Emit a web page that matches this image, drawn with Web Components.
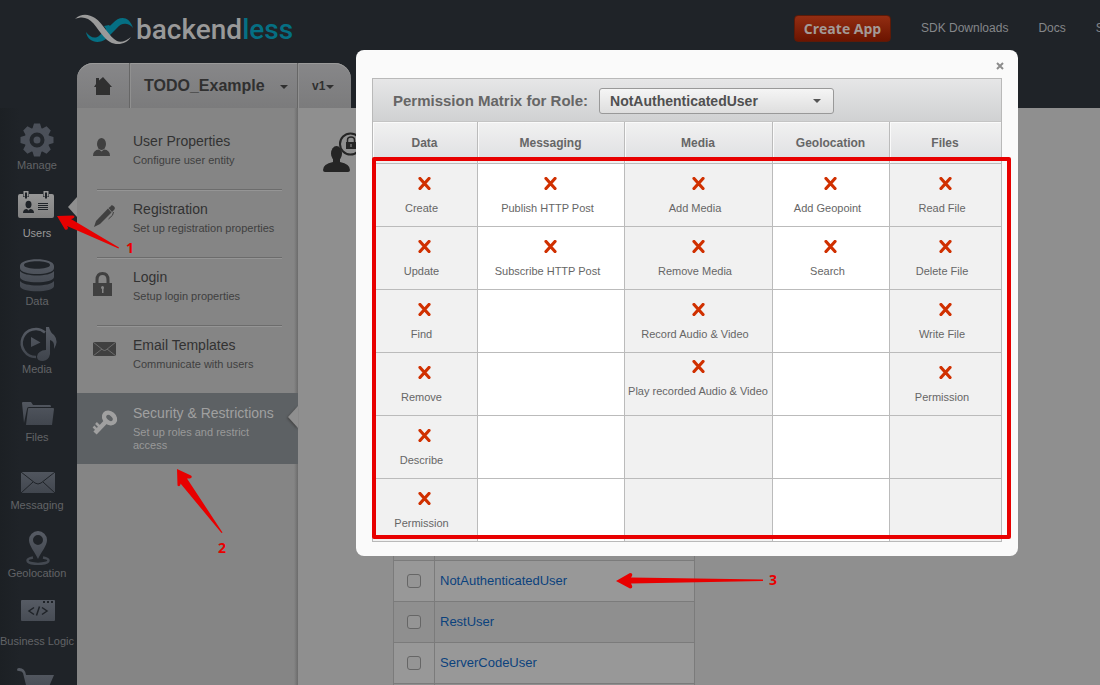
<!DOCTYPE html>
<html lang="en">
<head>
<meta charset="utf-8">
<title>Backendless Console</title>
<style>
  body { margin: 0; background: #1f2328; font-family: "Liberation Sans", Arial, sans-serif; }
</style>
</head>
<body>
<console-shell>
  <console-header slot="header"></console-header>
  <main-nav slot="nav">
    <nav-item icon="manage">Manage</nav-item>
    <nav-item icon="users" active>Users</nav-item>
    <nav-item icon="data">Data</nav-item>
    <nav-item icon="media">Media</nav-item>
    <nav-item icon="files">Files</nav-item>
    <nav-item icon="messaging">Messaging</nav-item>
    <nav-item icon="geolocation">Geolocation</nav-item>
    <nav-item icon="logic">Business Logic</nav-item>
    <nav-item icon="cart"></nav-item>
  </main-nav>
  <sub-menu slot="menu">
    <menu-item icon="person" heading="User Properties">Configure user entity</menu-item>
    <menu-item icon="pen" heading="Registration">Set up registration properties</menu-item>
    <menu-item icon="lock" heading="Login">Setup login properties</menu-item>
    <menu-item icon="mail" heading="Email Templates" last>Communicate with users</menu-item>
    <menu-item icon="key" heading="Security &amp; Restrictions" last active>Set up roles and restrict access</menu-item>
  </sub-menu>
  <role-list></role-list>
  <permission-dialog slot="overlay"><permission-matrix></permission-matrix></permission-dialog>
  <step-arrows slot="overlay"></step-arrows>
</console-shell>

<script>
const GEAR_TEETH = [0, 45, 90, 135].map(a => `<path d="M-3-16.500h6l2 6.500h-10zM-3 16.500h6l2-6.500h-10z" transform="rotate(${a})"/>`).join('');
const NAV_ICONS = {
  manage: `<g transform="translate(37 21)" fill="#4b5059">${GEAR_TEETH}<circle r="12.500"/><circle r="5.500" stroke="#22262b" stroke-width="4"/></g>`,
  users: `<path d="M20 7h3v3h6V7h14v3h6V7h3q2 0 2 2v20q0 2-2 2H20q-2 0-2-2V9q0-2 2-2z"/><path d="M23.500 4h5v5.500h-5zM43.500 4h5v5.500h-5z"/><g fill="#1f2328"><path d="M25 5.500h2v6h-2zM45 5.500h2v6h-2z"/><ellipse cx="28.500" cy="17.500" rx="3" ry="3.700"/><path d="M23 26q0-4 4-4l1.500 1.500L30 22q4 0 4 4z"/><path d="M38 16h10v1H38zM38 18h10v1H38zM38 20h10v1H38zM38 22h10v1H38z"/></g>`,
  data: `<path fill-rule="evenodd" d="M20 11c0-9 34-9 34 0v2c0 8-34 8-34 0zm4-1c0 5 26 5 26 0s-26-5-26 0z"/><path d="M20 16c4 6 30 6 34 0v6c0 7-34 7-34 0zM20 26c4 6 30 6 34 0v5c0 7-34 7-34 0z"/>`,
  media: `<path d="M45 9.500A14 14 0 1 0 36 34" fill="none" stroke="url(#g)" stroke-width="2.500"/><path d="M31 14l9.500 5.500L31 24z"/><path d="M46 4h3q1 5 5 8 5 6 0 14 1-8-4-9v14q-1 6-7 7-6 0-6-4.500 1-6 9-6.500z"/>`,
  files: `<path d="M22 12q0-1 1-1h8l2 3h17q1 0 1 2H29q-2 0-2 2l-3 14z"/><path d="M29 17h24q1 0 1 1l-2 16H26l2-16q0-1 1-1z"/>`,
  messaging: `<path d="M21 13h34v21H21z"/><path d="M21 13l14 11q3 2 6 0l14-11M21 34l12-11M55 34L43 23" fill="none" stroke="#1f2328"/>`,
  geolocation: `<path fill-rule="evenodd" d="M38 4a9 9 0 0 0-9 9c0 6 6 12 9 19 3-7 9-13 9-19a9 9 0 0 0-9-9zm0 4a5 5 0 1 1 0 10 5 5 0 0 1 0-10z"/><path d="M33 30.500q-5.500 1-5.500 3c0 4.500 21 4.500 21 0q0-2-5.500-3" fill="none" stroke="#444951" stroke-width="2.500"/>`,
  logic: `<rect x="21" y="5" width="34" height="21" rx="1"/><path d="M43 6h2v2h-2zM47 6h2v2h-2zM51 6h2v2h-2z" fill="#1f2328"/><path d="M34 12.500L29 16l5 3.500M42 12.500l5 3.500-5 3.500M39.500 11.500l-3 9" fill="none" stroke="#1f2328" stroke-width="1.500"/>`,
  cart: `<path d="M17 7q0-2 2-2 6 0 7 7h28l-6 14H27L23 10q-1-2-4-2-2 0-2-1z"/>`
};
const MENU_ICONS = {
  person: `<ellipse cx="24.500" cy="23" rx="4.500" ry="6"/><path d="M16 35q0-6 6-6.500l2.500 2 2.500-2q6 .5 6 6.500z"/>`,
  pen: `<path d="M17 38l2-6L31 19.500l3.500 4L23 35z"/><path d="M31.500 19l2-1.500q1-2 3-.5 2.500 2 .5 4l-2 2z"/><path d="M36.500 23q.5 3-5 7" stroke="#404040" fill="none"/>`,
  lock: `<path d="M20 27v-4q0-6.500 5.500-6.500T31 23v4" fill="none" stroke="#404040" stroke-width="3"/><path d="M16 26h19v13H16z"/><circle cx="25.500" cy="30.500" r="1.500" fill="#858585"/><path d="M25 31h1.500v5H25z" fill="#858585"/>`,
  mail: `<path d="M16 17h23v14H16z"/><path d="M16 17l10 8q1.500 1 3 0l10-8M16 31l9-7M39 31l-9-7" fill="none" stroke="#808080" stroke-width=".7"/>`,
  key: `<g fill="none" stroke="#a0a0a0"><ellipse cx="32.500" cy="25" rx="6" ry="4.500" stroke-width="4.500" transform="rotate(40 32.500 25)"/><path d="M29 28.500L18 40" stroke-width="4.500"/><path d="M23 34l-4-4M20 37l-3.500-3.500" stroke-width="2.500"/></g>`
};

const define = (name, html, init) => {
  const template = document.createElement('template');
  template.innerHTML = html;
  customElements.define(name, class extends HTMLElement {
    constructor() {
      super();
      this.attachShadow({ mode: 'open' }).append(template.content.cloneNode(true));
    }
    connectedCallback() { if (init) init(this, this.shadowRoot); }
  });
};

define('console-shell', `
<style>
  :host { display: grid; grid-template: 108px minmax(0, 1fr) / 77px 221px minmax(0, 1fr); height: 100vh; overflow: hidden; position: relative; }
  slot[name=header]::slotted(*) { grid-column: 1 / -1; }
  main { display: block; background: #8f8f8f; overflow: hidden; }
</style>
<slot name="header"></slot><slot name="nav"></slot><slot name="menu"></slot>
<main><slot></slot></main><slot name="overlay"></slot>`);

define('console-header', `
<style>
  :host { display: flex; justify-content: space-between; align-items: flex-start; overflow: hidden; background: #1f2328; }
  .left { margin-left: 75px; }
  .brand { display: flex; align-items: center; height: 35px; margin-top: 12px; gap: 3px; text-decoration: none; color: #999; font: 500 28px/35px Roboto, sans-serif; }
  .brand b { font-weight: 500; color: #056f83; }
  .brand svg { display: block; width: 58px; height: 35px; }
  .tabs { display: flex; height: 45px; margin: 16px 0 0 2px; border-radius: 16px 16px 0 0; overflow: hidden; background: linear-gradient(#878789, #7b7b7c); box-shadow: inset 0 1px #9a9a9a; }
  .tabs button { display: flex; align-items: center; border: 0; background: none; padding: 0; color: #303030; font: bold 16px/20px "Liberation Sans", Arial, sans-serif; }
  .tabs button + button { border-left: 1px solid #666; box-shadow: inset 1px 0 #909090; }
  .caret { margin-top: 3px; }
  .home { width: 52px; justify-content: center; }
  .app { width: 168px; padding: 0 9px 0 14px !important; justify-content: space-between; }
  .version { width: 54px; padding-left: 14px !important; font-size: 12px !important; gap: 1px; }
  nav { display: flex; width: 306px; overflow: hidden; padding-top: 15px; align-items: flex-start; white-space: nowrap; }
  nav a { color: #85878a; text-decoration: none; font-size: 12px; line-height: 26px; margin-right: 30px; }
  .create { width: 97px; height: 27px; margin-right: 30px; padding: 0; flex: none; border: 1px solid #5c1a08; border-radius: 4px; background: linear-gradient(#922d12, #6c1400); color: #a39a97; font: bold 14px/24px "Open Sans", sans-serif; }
</style>
<div class="left">
  <a class="brand" href="#" aria-label="backendless">
    <svg viewBox="0 0 58 35"><path fill="#056f83" d="M11 20c4 5 9 8 14 3L38 11c6-7 16-8 20 5-5-6-12-5-16 0L31 27c-7 5-18 4-20-7z"/><path fill="#056f83" d="M29 14l5-1 3 3-4 4z"/><path fill="#9a9a9a" d="M0 7C6 1 14 2 20 6c8 5 14 19 22 23 4 2 9 0 14-4-4 7-14 9-21 5C26 25 21 11 13 7 9 5 5 5 0 7z"/></svg>
    <span>backend<b>less</b></span>
  </a>
  <div class="tabs">
    <button class="home" aria-label="Home"><svg width="20" height="20" viewBox="0 0 20 20" fill="#303030"><path d="M1 11l2-3V2h3v2.500L10 1l9 10h-2v8H3v-8z"/></svg></button>
    <button class="app">TODO_Example<svg class="caret" width="8" height="4"><path d="M0 0h8L4 4z" fill="#303030"/></svg></button>
    <button class="version">v1<svg class="caret" width="8" height="4"><path d="M0 0h8L4 4z" fill="#303030"/></svg></button>
  </div>
</div>
<nav><button class="create">Create App</button><a href="#">SDK Downloads</a><a href="#">Docs</a><a href="#">Support</a></nav>`);

define('main-nav', `
<style>:host { display: flex; flex-direction: column; gap: 14px; padding-top: 11px; background: linear-gradient(90deg, #1c2024, #1f2328 20px); }</style>
<slot></slot>`);

define('nav-item', `
<style>
  :host { display: block; position: relative; flex: none; }
  a { display: block; width: 74px; text-align: center; white-space: nowrap; font-size: 11px; line-height: 16px; color: #626467; text-decoration: none; }
  svg { display: block; width: 77px; height: 38px; --a: #575c65; --b: #40454d; }
  :host([active]) a { color: #999; }
  :host([active]) svg { --a: #999; --b: #7d7d7d; }
  :host([active])::after { content: ""; position: absolute; right: 0; top: 10px; border: 10px solid transparent; border-left: 0; border-right: 9px solid #8f8f8f; }
</style>
<a href="#"><svg viewBox="0 0 77 38" fill="url(#g)"></svg><slot></slot></a>`, (el, root) => {
  root.querySelector('svg').innerHTML =
    `<defs><linearGradient id="g" gradientUnits="userSpaceOnUse" x1="0" y1="4" x2="0" y2="36"><stop stop-color="var(--a)"/><stop offset="1" stop-color="var(--b)"/></linearGradient></defs>` + NAV_ICONS[el.getAttribute('icon')];
});

define('sub-menu', `
<style>:host { display: block; padding-top: 13px; background: linear-gradient(90deg, transparent 217px, #6b6b6b 221px), #858585; }</style>
<slot></slot>`);

define('menu-item', `
<style>
  :host { display: block; position: relative; }
  a { display: flex; min-height: 68px; color: #404040; text-decoration: none; }
  svg { display: block; flex: none; width: 56px; height: 48px; }
  .text { padding: 12px 20px 12px 0; font-size: 11px; line-height: 13px; }
  b { display: block; font-weight: 400; font-size: 14px; line-height: 16px; margin-bottom: 5px; color: #323232; white-space: nowrap; }
  :host(:not([last]))::after { content: ""; position: absolute; left: 20px; right: 16px; bottom: -2px; height: 1px; background: #6c6c6c; border-bottom: 1px solid #959595; }
  :host([active]) { background: #5d6164; }
  :host([active]) a { color: #999; }
  :host([active]) b { color: #a0a0a0; }
  .notch { display: none; position: absolute; right: 0; top: 13px; border: 11px solid transparent; border-left: 0; border-right: 10px solid #8f8f8f; filter: drop-shadow(-1px 1px 1px #444); }
  :host([active]) .notch { display: block; }
</style>
<a href="#"><svg viewBox="0 0 56 48" fill="#404040"></svg><span class="text"><b></b><slot></slot></span></a><i class="notch"></i>`, (el, root) => {
  root.querySelector('svg').innerHTML = MENU_ICONS[el.getAttribute('icon')];
  root.querySelector('b').textContent = el.getAttribute('heading');
});

define('role-list', `
<style>
  :host { display: block; padding: 24px 25px; }
  .head { min-height: 387px; }
  .head svg { display: block; }
  table { width: 302px; margin-left: 70px; border-collapse: collapse; }
  td { height: 40px; padding: 0 5px; border: 1px solid #7b7b7b; background: #989898; font-size: 13px; line-height: 16px; }
  tr:nth-child(odd) td { background: #8f8f8f; }
  td:first-child { width: 30px; text-align: center; }
  input { appearance: none; display: block; margin: 0 auto; width: 14px; height: 14px; border: 1px solid #666; border-radius: 3px; background: #959595; }
  a { color: #0b427d; text-decoration: none; }
</style>
<div class="head"><svg width="48" height="40" viewBox="0 0 48 40"><ellipse cx="13.500" cy="21.500" rx="5.500" ry="7.500" fill="#252525"/><path d="M0 38q0-6 10-8V26h7v4q10 2 10 8 0 2-2 2H2q-2 0-2-2z" fill="#252525"/><circle cx="27.500" cy="12" r="10.500" fill="#8f8f8f" stroke="#252525" stroke-width="2"/><path d="M23 10h10v7H23z" fill="#252525"/><path d="M24.500 10V8q0-3 3.500-3t3.500 3v2" fill="none" stroke="#252525" stroke-width="1.500"/><path d="M27.500 12h1v3h-1z" fill="#999"/></svg></div>
<table><tbody></tbody></table>`, (el, root) => {
  root.querySelector('tbody').innerHTML = '<tr><td></td><td></td></tr>' +
    ['NotAuthenticatedUser', 'RestUser', 'ServerCodeUser'].map(r => `<tr><td><input type="checkbox" aria-label="${r}"></td><td><a href="#">${r}</a></td></tr>`).join('') + '<tr><td></td><td></td></tr>';
});

define('permission-dialog', `
<style>
  :host { display: block; position: absolute; left: 356px; right: 82px; top: 50px; box-sizing: border-box; padding: 28px 16px 14px; border-radius: 8px; background: #fafafa; }
  .close { position: absolute; right: 10px; top: 8px; width: 16px; height: 16px; padding: 0; border: 0; background: none; display: grid; place-items: center; }
  .frame { position: absolute; left: 16px; right: 7px; top: 107px; bottom: 17px; border: 4px solid #e80000; border-radius: 2px; pointer-events: none; }
</style>
<button class="close" aria-label="Close"><svg width="8" height="8" viewBox="0 0 8 8"><path d="M1 1l6 6M7 1L1 7" stroke="#8c8c8c" stroke-width="2"/></svg></button>
<slot></slot><div class="frame"></div>`);

define('permission-matrix', `
<style>
  :host { display: block; border: 1px solid #b9b9b9; }
  .title { display: flex; align-items: center; gap: 11px; height: 42px; padding-left: 20px; border-bottom: 1px solid #c4c4c4; background: linear-gradient(#e6e6e7, #d0d1d2); color: #666; font-weight: bold; font-size: 15px; }
  .pick { position: relative; flex: none; }
  select { appearance: none; display: block; box-sizing: border-box; width: 235px; height: 26px; margin-top: 1px; padding: 0 10px; border: 1px solid #999; border-radius: 3px; background: linear-gradient(#f5f5f5, #dedede); color: #505050; font: bold 14px/20px "Liberation Sans", Arial, sans-serif; }
  .pick svg { position: absolute; right: 13px; top: 12px; pointer-events: none; }
  table { width: 100%; table-layout: fixed; border-collapse: separate; border-spacing: 0; }
  th, td { box-sizing: border-box; padding: 0 1px 0 0; text-align: center; border-left: 1px solid #bbb; }
  th:first-child, td:first-child { border-left: 0; }
  th { height: 41px; font-size: 12px; color: #666; background: linear-gradient(#f1f1f1, #e0e1e3 36px, #f0f0f0 37px); box-shadow: inset 1px 1px #fafafa; }
  td { height: 63px; padding-top: 13px; vertical-align: top; border-top: 1px solid #bbb; background: #fff; color: #666; font-size: 11px; line-height: 16px; }
  td:nth-child(odd) { background: #f1f1f1; }
  td svg { display: block; margin: 0 auto 10px; }
  td span { display: block; padding-right: 6px; white-space: nowrap; }
  td.wide { padding-top: 7px; }
  td.wide span { padding: 0; }
</style>
<div class="title"><label for="role">Permission Matrix for Role:</label>
  <div class="pick"><select id="role"><option>NotAuthenticatedUser</option><option>RestUser</option><option>ServerCodeUser</option></select><svg width="8" height="4"><path d="M0 0h8L4 4z" fill="#555"/></svg></div></div>
<table>
  <colgroup><col style="width:104px"><col style="width:147px"><col style="width:148px"><col style="width:117px"><col style="width:112px"></colgroup>
  <thead><tr><th>Data</th><th>Messaging</th><th>Media</th><th>Geolocation</th><th>Files</th></tr></thead>
  <tbody></tbody>
</table>`, (el, root) => {
  const rows = [
    ['Create', 'Publish HTTP Post', 'Add Media', 'Add Geopoint', 'Read File'],
    ['Update', 'Subscribe HTTP Post', 'Remove Media', 'Search', 'Delete File'],
    ['Find', '', 'Record Audio &amp; Video', '', 'Write File'],
    ['Remove', '', 'Play recorded Audio &amp; Video', '', 'Permission'],
    ['Describe', '', '', '', ''],
    ['Permission', '', '', '', '']
  ];
  const cross = '<svg width="13" height="13" viewBox="0 0 13 13"><path d="M2 1.500l9 10M11 1.500l-9 10" stroke="#d03000" stroke-width="3.200" stroke-linecap="round"/></svg>';
  root.querySelector('tbody').innerHTML = rows.map(r => '<tr>' + r.map(t =>
    t ? `<td${t.startsWith('Play') ? ' class="wide"' : ''}>${cross}<span>${t}</span></td>` : '<td></td>').join('') + '</tr>').join('');
});

define('step-arrows', `
<style>
  :host { display: block; position: absolute; left: 0; top: 0; pointer-events: none; }
  svg { display: block; overflow: visible; }
  text { font: bold 14px "Open Sans", sans-serif; text-anchor: middle; }
</style>
<svg width="1" height="1" fill="#e80000">
  <path d="M57 216l16-.5q3 1 0 3l-2 .5 48 28.500-.5 1L67 226l1 1.500q0 3-3 2z"/>
  <path d="M177 469l14 6.500q2 2-1 3h-3l35.500 54-1 .5-41-49.500v1q-1 3-3 1z"/>
  <path d="M616 581l14-8q3 0 2 3l-1 1.500 132 2v1.500l-132 2.500 1 2q1 3-2 3z"/>
  <text x="130" y="253">1</text><text x="222" y="553">2</text><text x="773" y="585">3</text>
</svg>`);
</script>
</body>
</html>
